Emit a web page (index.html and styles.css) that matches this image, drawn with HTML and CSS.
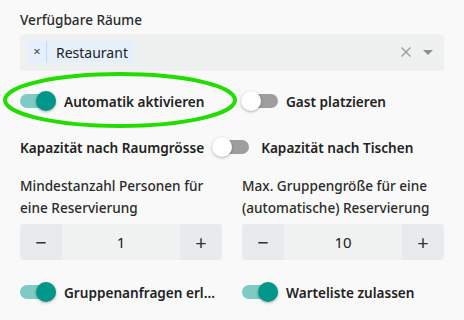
FILE: index.html
```html
<!DOCTYPE html>
<html lang="de">
<head>
    <meta charset="UTF-8">
    <meta name="viewport" content="width=device-width, initial-scale=1.0">
    <title>Automatik</title>
    <link rel="stylesheet" href="styles.css">
</head>
<body>
    <div class="panel">
        <!-- Räume -->
        <div class="field">
            <label class="field-label">Verfügbare Räume</label>
            <div class="select">
                <div class="chip">
                    <span class="chip-remove">×</span>
                    <span class="chip-text">Restaurant</span>
                </div>
                <div class="select-icons">
                    <svg width="12" height="12" viewBox="0 0 12 12"><path d="M1.5 1.5 L10.5 10.5 M10.5 1.5 L1.5 10.5" stroke="#9a9a9a" stroke-width="1.3" fill="none"/></svg>
                    <svg width="12" height="8" viewBox="0 0 12 8"><path d="M1 2 L11 2 L6 7 Z" fill="#8f8f8f"/></svg>
                </div>
            </div>
        </div>

        <!-- Schalter -->
        <div class="row two-col">
            <div class="toggle">
                <span class="switch on"><span class="knob"></span></span>
                <span class="toggle-label">Automatik aktivieren</span>
            </div>
            <div class="toggle">
                <span class="switch"><span class="knob"></span></span>
                <span class="toggle-label">Gast platzieren</span>
            </div>
            <svg class="highlight" width="238" height="60" viewBox="0 0 238 60"><ellipse cx="118" cy="29" rx="115" ry="26" fill="none" stroke="#22dd00" stroke-width="4"/></svg>
        </div>

        <div class="row both-sides">
            <span class="toggle-label">Kapazität nach Raumgrösse</span>
            <span class="switch"><span class="knob"></span></span>
            <span class="toggle-label">Kapazität nach Tischen</span>
        </div>

        <!-- Anzahl -->
        <div class="two-col numbers">
            <div class="field">
                <label class="field-label">Mindestanzahl Personen für eine Reservierung</label>
                <div class="stepper">
                    <button class="step-btn">−</button>
                    <span class="step-value">1</span>
                    <button class="step-btn">+</button>
                </div>
            </div>
            <div class="field">
                <label class="field-label">Max. Gruppengröße für eine (automatische) Reservierung</label>
                <div class="stepper">
                    <button class="step-btn">−</button>
                    <span class="step-value">10</span>
                    <button class="step-btn">+</button>
                </div>
            </div>
        </div>

        <div class="row two-col last">
            <div class="toggle">
                <span class="switch on"><span class="knob"></span></span>
                <span class="toggle-label ellipsis">Gruppenanfragen erlauben</span>
            </div>
            <div class="toggle">
                <span class="switch on"><span class="knob"></span></span>
                <span class="toggle-label">Warteliste zulassen</span>
            </div>
        </div>
    </div>
</body>
</html>
```

FILE: styles.css
```css
body {
    margin: 0;
    background-color: #f9f9f9;
    font-family: "Noto Sans", "Open Sans", sans-serif;
    color: #222;
    width: 464px;
    height: 320px;
    overflow: hidden;
}
.panel {
    padding: 9px 20px 0 20px;
    width: 424px;
}
.field-label {
    display: block;
    font-size: 13.6px;
    font-weight: 500;
    line-height: 22px;
    color: #2b2b2b;
}
.select {
    margin-top: 3px;
    height: 36px;
    background-color: #eff0f0;
    border-radius: 4px;
    box-shadow: 0 1px 1px rgba(0, 0, 0, 0.04);
    display: flex;
    align-items: center;
    justify-content: space-between;
    padding: 0 10px 0 8px;
}
.chip {
    display: flex;
    align-items: center;
    height: 22px;
    background-color: #e5f0fc;
    border-radius: 2px;
    font-size: 14px;
}
.chip-remove {
    width: 18px;
    height: 22px;
    line-height: 21px;
    text-align: center;
    font-size: 13px;
    color: #444;
    border-right: 1px solid #c4dcf6;
}
.chip-text {
    padding: 0 6px 0 9px;
    color: #222;
}
.select-icons {
    display: flex;
    align-items: center;
    gap: 10px;
}
.row {
    display: flex;
    align-items: center;
    height: 46px;
}
.two-col {
    display: grid;
    grid-template-columns: 202px 202px;
    column-gap: 20px;
}
.row.two-col {
    position: relative;
    height: 46px;
    margin-top: 8px;
    align-items: center;
}
.toggle {
    display: flex;
    align-items: center;
    gap: 8px;
    min-width: 0;
}
.toggle-label {
    font-size: 13.6px;
    font-weight: 600;
    color: #222;
    white-space: nowrap;
}
.ellipsis {
    overflow: hidden;
    text-overflow: ellipsis;
}
.switch {
    position: relative;
    flex: none;
    width: 36px;
    height: 14px;
    border-radius: 7px;
    background-color: #9e9e9e;
}
.switch .knob {
    position: absolute;
    top: -3px;
    left: -1px;
    width: 20px;
    height: 20px;
    border-radius: 50%;
    background-color: #fff;
    box-shadow: 0 1px 3px rgba(0, 0, 0, 0.3);
}
.switch.on {
    background-color: #7fcac3;
}
.switch.on .knob {
    left: 16px;
    background-color: #00968a;
}
.highlight {
    position: absolute;
    left: -18px;
    top: -7px;
}
.both-sides {
    gap: 9px;
}
.both-sides .switch {
    margin-right: 3px;
}
.numbers {
    margin-top: 5px;
}
.stepper {
    margin-top: 5px;
    display: flex;
    height: 36px;
    background-color: #f0f1f1;
    border-radius: 4px;
    overflow: hidden;
}
.step-btn {
    width: 42px;
    border: none;
    background-color: #e8ebee;
    font-family: inherit;
    font-size: 20px;
    color: #333;
    padding: 0;
}
.step-value {
    flex: 1;
    text-align: center;
    line-height: 36px;
    font-size: 15px;
    color: #222;
}
.row.last {
    margin-top: 9px;
}
```
